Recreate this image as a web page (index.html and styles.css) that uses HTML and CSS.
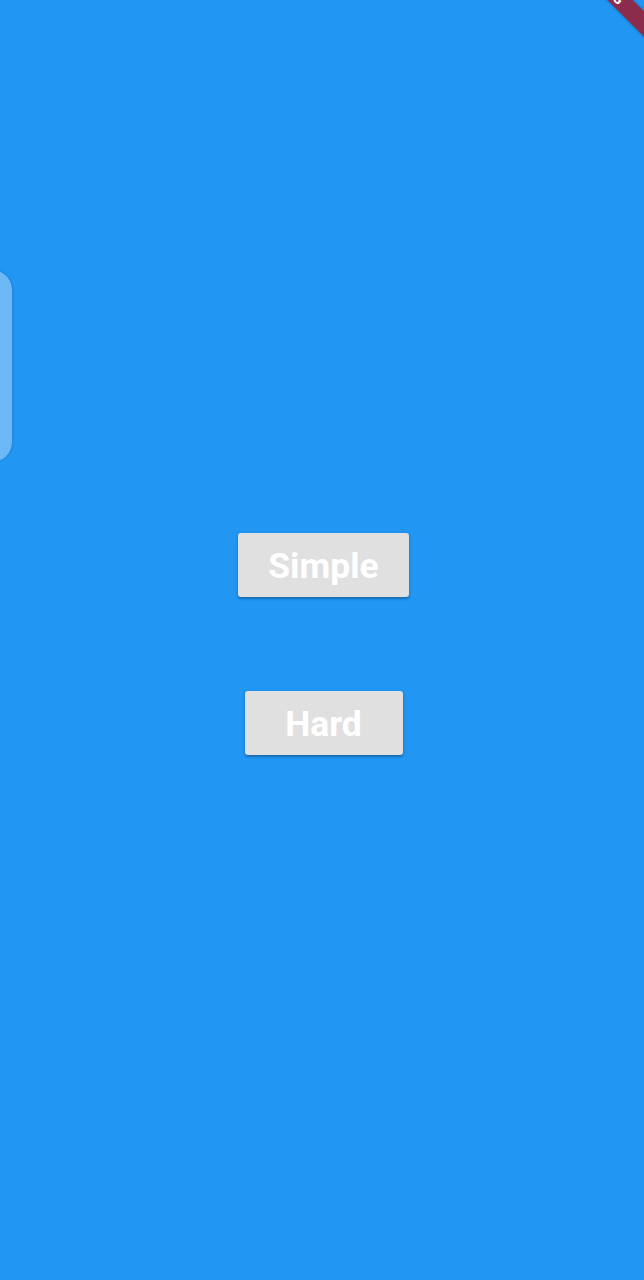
FILE: index.html
```html
<!DOCTYPE html>
<html>
<head>
<meta charset="utf-8">
<link rel="stylesheet" href="styles.css">
</head>
<body>
<div class="screen">
  <div class="side-tab"></div>
  <div class="buttons">
    <button class="btn btn-simple">Simple</button>
    <button class="btn btn-hard">Hard</button>
  </div>
  <div class="debug-banner"><span>DEBUG</span></div>
</div>
</body>
</html>
```
FILE: styles.css
```css
html, body {
  margin: 0;
  padding: 0;
}
.screen {
  position: relative;
  width: 644px;
  height: 1280px;
  background: #2196f3;
  overflow: hidden;
  font-family: Roboto, "Liberation Sans", sans-serif;
}
.side-tab {
  position: absolute;
  left: -40px;
  top: 270px;
  width: 52px;
  height: 192px;
  border-radius: 20px;
  background: #6cb8f6;
  box-shadow: 1px 0 2px rgba(0, 0, 0, 0.12);
}
.buttons {
  display: flex;
  flex-direction: column;
  align-items: center;
  gap: 94px;
  padding-top: 533px;
  padding-left: 3px;
}
.btn {
  height: 64px;
  border: none;
  border-radius: 3px;
  background: #e0e0e0;
  color: #ffffff;
  font-family: Roboto, "Liberation Sans", sans-serif;
  font-weight: 700;
  font-size: 35.5px;
  padding: 2px 0 0 0;
  box-shadow: 0 2px 2px rgba(0, 0, 0, 0.2), 0 1px 4px rgba(0, 0, 0, 0.12);
}
.btn-simple {
  width: 171px;
}
.btn-hard {
  width: 158px;
}
.debug-banner {
  position: absolute;
  left: 505px;
  top: -24px;
  width: 200px;
  height: 18px;
  background: #8c2c4d;
  transform: rotate(45deg);
  display: flex;
  align-items: center;
  justify-content: center;
  box-shadow: 0 0 3px rgba(0, 0, 0, 0.25);
}
.debug-banner span {
  color: #ffffff;
  font-weight: 700;
  font-size: 14px;
  letter-spacing: 1px;
}
```
